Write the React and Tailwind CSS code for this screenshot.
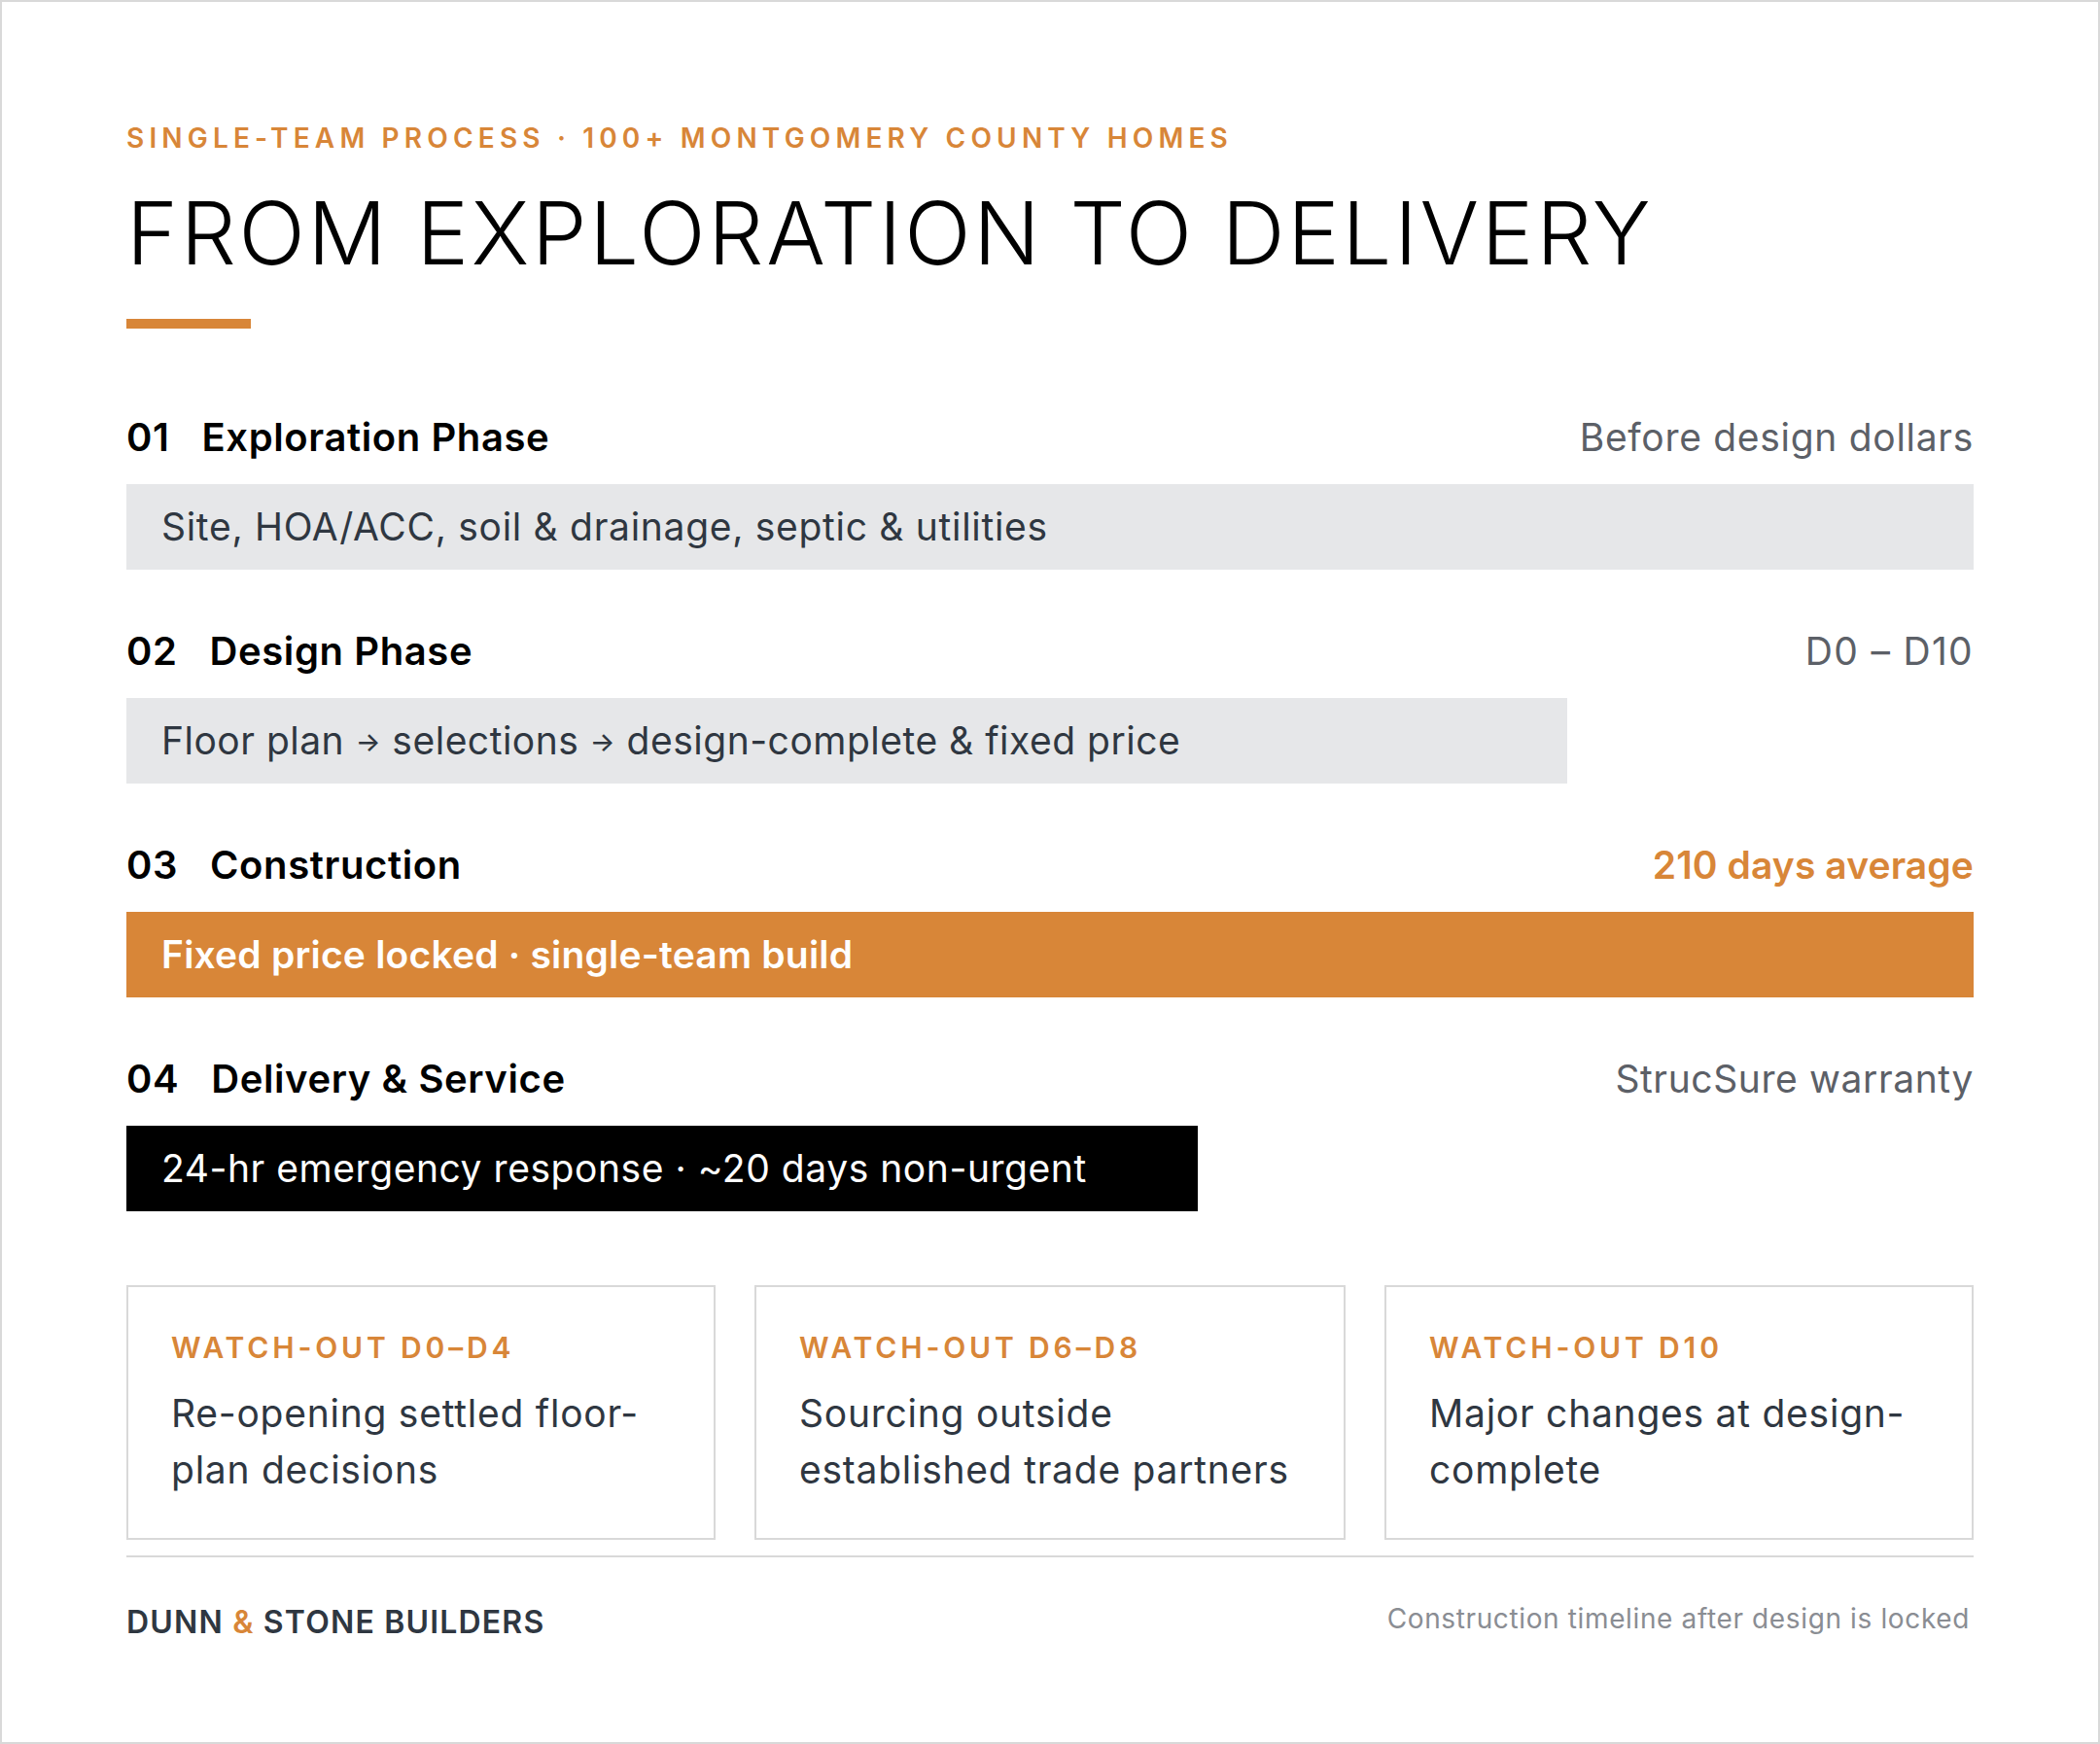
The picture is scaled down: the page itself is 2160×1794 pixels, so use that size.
const phases = [
  { n: "01", title: "Exploration Phase", note: "Before design dollars", text: "Site, HOA/ACC, soil & drainage, septic & utilities", bar: "w-full bg-[#e6e7e9] text-[#2f3741] tracking-[0.7px]", noteC: "text-[#5c6067] tracking-[0.7px]" },
  { n: "02", title: "Design Phase", note: "D0 – D10", text: <>Floor plan <span className="text-[27px] font-medium align-[3px]">→</span> selections <span className="text-[27px] font-medium align-[3px]">→</span> design-complete &amp; fixed price</>, bar: "w-[78%] bg-[#e6e7e9] text-[#2f3741] tracking-[0.5px]", noteC: "text-[#5c6067] tracking-[1.3px]" },
  { n: "03", title: "Construction", note: "210 days average", text: "Fixed price locked · single-team build", bar: "w-full bg-[#d88638] text-white font-semibold tracking-[0.2px]", noteC: "text-[#d88638] font-semibold tracking-[0.1px]" },
  { n: "04", title: "Delivery & Service", note: "StrucSure warranty", text: "24-hr emergency response · ~20 days non-urgent", bar: "w-[58%] bg-black text-white tracking-[0.55px]", noteC: "text-[#5c6067] tracking-[0.6px]" },
];

const cards = [
  { t: "WATCH-OUT D0–D4", b: <>Re-opening settled floor-<br />plan decisions</> },
  { t: "WATCH-OUT D6–D8", b: <>Sourcing outside<br />established trade partners</> },
  { t: "WATCH-OUT D10", b: <>Major changes at design-<br />complete</> },
];

export default function App() {
  return (
    <div className="w-[2160px] h-[1794px] border-2 border-[#d9d9d9] bg-white pt-[120px] px-[128px] font-['Inter','Liberation_Sans',sans-serif]">
      <div className="h-[40px] leading-[40px] text-[28px] font-semibold tracking-[5.17px] text-[#d88638] whitespace-nowrap">
        SINGLE-TEAM PROCESS · 100+ MONTGOMERY COUNTY HOMES
      </div>
      <h1 className="mt-[28px] h-[100px] leading-[100px] text-[90px] font-light tracking-[2.75px] text-black whitespace-nowrap">
        FROM EXPLORATION TO DELIVERY
      </h1>
      <div className="mt-[38px] w-[128px] h-[10px] bg-[#d88638]" />

      <div className="mt-[84px] flex flex-col gap-[56px]">
        {phases.map((p) => (
          <section key={p.n} className="flex flex-col gap-[20px]">
            <div className="h-[56px] flex items-center justify-between">
              <div className="flex gap-[33px] text-[40px] font-semibold tracking-[0.6px] text-black">
                <span>{p.n}</span>
                <span>{p.title}</span>
              </div>
              <div className={`text-[39px] ${p.noteC}`}>{p.note}</div>
            </div>
            <div className={`h-[88px] flex items-center px-[36px] text-[39px] whitespace-pre ${p.bar}`}>
              <span>{p.text}</span>
            </div>
          </section>
        ))}
      </div>

      <div className="mt-[76px] grid grid-cols-[606px_608px_606px] gap-[40px]">
        {cards.map((c) => (
          <div key={c.t} className="h-[262px] border-2 border-[#d9d9d9] px-[44px] pt-[42px]">
            <div className="h-[40px] leading-[40px] text-[30px] font-semibold tracking-[3.85px] text-[#d88638]">{c.t}</div>
            <div className="mt-[19px] text-[39px] tracking-[0.75px] leading-[58px] text-[#2f3741]">{c.b}</div>
          </div>
        ))}
      </div>

      <div className="mt-[16px] h-[2px] bg-[#d9d9d9]" />
      <div className="mt-[42px] flex items-center justify-between">
        <div className="text-[32px] font-semibold tracking-[1.18px] text-[#2f3741]">
          DUNN <span className="text-[#d88638]">&amp;</span> STONE BUILDERS
        </div>
        <div className="text-[28px] tracking-[0.63px] text-[#8a8d93] mr-[4px] mb-[7px]">Construction timeline after design is locked</div>
      </div>
    </div>
  );
}
